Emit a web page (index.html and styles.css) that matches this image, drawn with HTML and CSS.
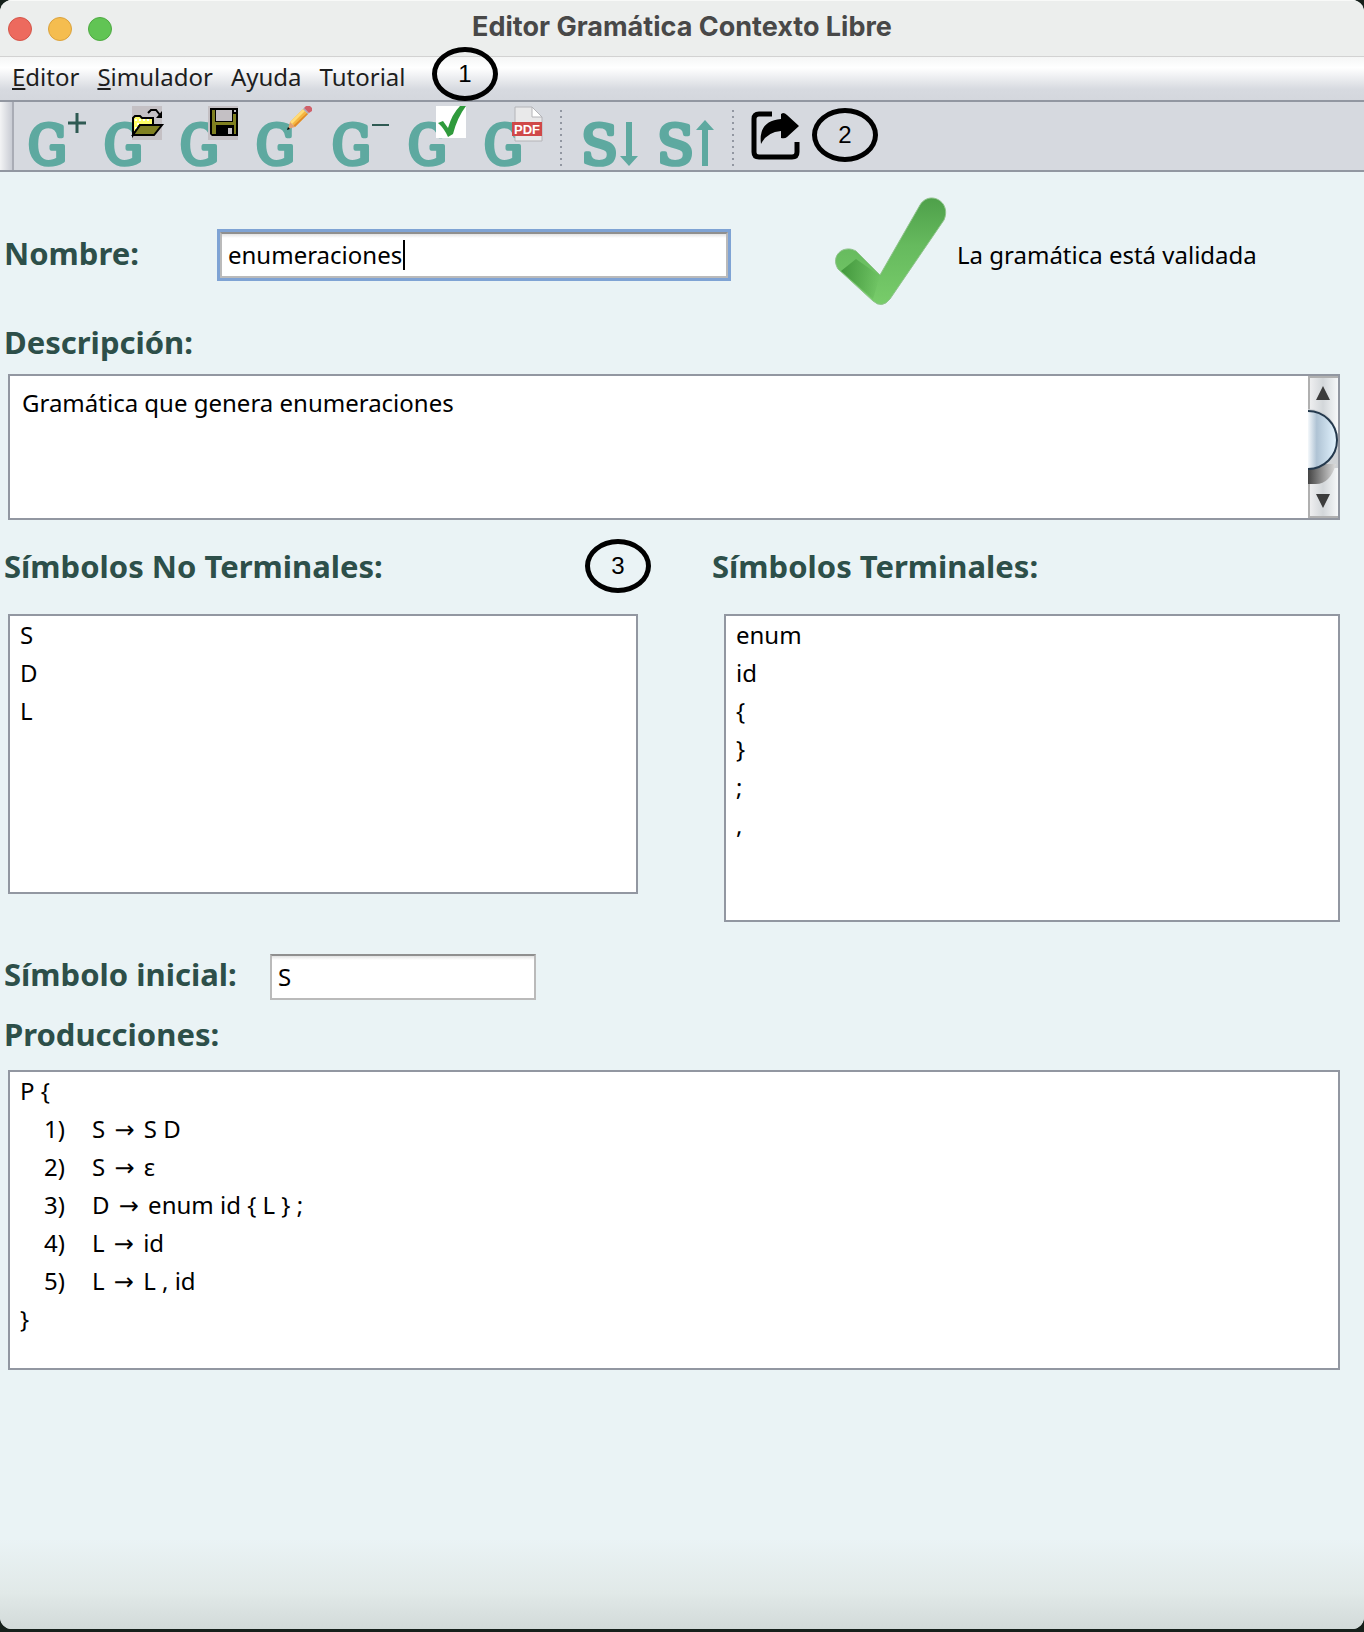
FILE: index.html
```html
<!DOCTYPE html>
<html lang="es">
<head>
<meta charset="utf-8">
<title>Editor Gramática Contexto Libre</title>
<link rel="stylesheet" href="styles.css">
</head>
<body>
<div class="window">
  <header class="titlebar">
    <div class="lights">
      <button class="light light-close" aria-label="Cerrar"></button>
      <button class="light light-min" aria-label="Minimizar"></button>
      <button class="light light-max" aria-label="Ampliar"></button>
    </div>
    <h1 class="title">Editor Gramática Contexto Libre</h1>
  </header>

  <nav class="menubar">
    <button class="menu"><u>E</u>ditor</button>
    <button class="menu"><u>S</u>imulador</button>
    <button class="menu">Ayuda</button>
    <button class="menu">Tutorial</button>
    <span class="mark mark-menu">1</span>
  </nav>

  <div class="toolbar">
    <span class="grip"></span>
    <button class="tool" aria-label="Nueva gramática">
      <svg class="icon" viewBox="0 0 60 62"><text class="glyph" x="0" y="58">G</text>
        <path d="M40 17H58M49 7V27" stroke="#2f5a53" stroke-width="3"/></svg>
    </button>
    <button class="tool" aria-label="Abrir gramática">
      <svg class="icon" viewBox="0 0 60 62"><text class="glyph" x="0" y="58">G</text>
        <path fill="#c4c0c4" d="M28 0h30v34H28z"/>
        <path fill="#ffff66" stroke="#000" stroke-width="2" d="M29 29V12l2-2h5l2 2h11v7H36z"/>
        <path stroke="#fff" stroke-width="2" stroke-dasharray="2 2" d="M31 14h16M33 18h3M31 22h3"/>
        <path fill="#808020" stroke="#000" stroke-width="2" d="M36 19h22l-8 10H29z"/>
        <path fill="none" stroke="#000" stroke-width="2" d="M44 7l3-3h5l4 5"/>
        <path d="M58 5v7h-6z"/></svg>
    </button>
    <button class="tool" aria-label="Guardar gramática">
      <svg class="icon" viewBox="0 0 60 62"><text class="glyph" x="0" y="58">G</text>
        <path fill="#c4c0c4" d="M28 0h30v34H28z"/>
        <path d="M30 2h28v28H32l-2-2z"/>
        <path fill="#808020" d="M32 4h3v12h18V8h3v20h-2v-9H36v9h-4z"/>
        <path fill="#c4c0c4" d="M36 4h16v11H36zM54 4h2v2h-2zM48 22h4v6h-4z"/></svg>
    </button>
    <button class="tool" aria-label="Modificar gramática">
      <svg class="icon" viewBox="0 0 60 62"><text class="glyph" x="0" y="58">G</text>
        <path fill="#f5b640" d="M34 16L47 3l5 5-13 13z"/>
        <path fill="#ffdc78" d="M34 16L47 3l2 2-13 13z"/>
        <path fill="#e08a28" d="M37 20L51 7l1 1-13 13z"/>
        <path fill="#e2a070" d="M34 16l5 5-7 2z"/><path d="M32 21l2 2-3 1z"/>
        <path fill="#aab" d="M47 3l1-1 5 5-1 1z"/>
        <path fill="#d0606a" d="M48 2l2-2h4l2 2v3l-3 2z"/></svg>
    </button>
    <button class="tool" aria-label="Eliminar gramática">
      <svg class="icon" viewBox="0 0 60 62"><text class="glyph" x="0" y="58">G</text>
        <path d="M40 19H57" stroke="#2f5a53" stroke-width="2"/></svg>
    </button>
    <button class="tool" aria-label="Validar gramática">
      <svg class="icon" viewBox="0 0 60 62"><text class="glyph" x="0" y="58">G</text>
        <path fill="#fff" d="M28 0h30v32H28z"/>
        <path fill="#2f9a3c" d="M30 17l5-2 5 7q4-14 12-22h6q-9 12-13 28l-5 3q-4-9-10-14z"/></svg>
    </button>
    <button class="tool" aria-label="Exportar a PDF">
      <svg class="icon" viewBox="0 0 60 62"><text class="glyph" x="0" y="58">G</text>
        <path fill="#e9e9ea" stroke="#b4b4b8" d="M31 1h17l10 10v24H31z"/>
        <path fill="#fff" stroke="#b4b4b8" d="M48 1v10h10z"/>
        <path fill="#d04848" d="M28 16h30v14H28z"/>
        <text class="pdf" x="43" y="28">PDF</text></svg>
    </button>
    <span class="divider"></span>
    <button class="tool" aria-label="Simulador descendente">
      <svg class="icon" viewBox="0 0 60 62"><text class="glyph glyph-wide" x="1" y="58">S</text>
        <path fill="#5ea9a0" d="M46 16h6v34h6L49 60l-9-10h6z"/></svg>
    </button>
    <button class="tool" aria-label="Simulador ascendente">
      <svg class="icon" viewBox="0 0 60 62"><text class="glyph glyph-wide" x="1" y="58">S</text>
        <path fill="#5ea9a0" d="M46 60h6V24h6l-9-10-9 10h6z"/></svg>
    </button>
    <span class="divider"></span>
    <button class="tool" aria-label="Salir">
      <svg class="icon" viewBox="0 0 60 62">
        <path fill="none" stroke="#000" stroke-width="5" d="M20 8H7q-5 0-5 5v33q0 5 5 5h33q5 0 5-5V36"/>
        <path d="M31 7q2 0 4 2l12 11-12 11q-2 2-6 1v-7q-14 1-20 13-3-23 20-25V8z"/></svg>
    </button>
    <span class="mark">2</span>
  </div>

  <main class="content">
    <div class="name-row">
      <label class="heading name-label" for="nombre">Nombre:</label>
      <div class="name-box"><input id="nombre" class="field" value="enumeraciones" size="13"><span class="caret"></span></div>
      <div class="status">
        <svg class="tick" viewBox="0 0 114 116">
          <defs><linearGradient id="leaf" x1="0" y1="0" x2="0" y2="1">
            <stop offset="0" stop-color="#4ea04a"/><stop offset=".45" stop-color="#66ba5e"/><stop offset="1" stop-color="#78cc6a"/></linearGradient>
          <linearGradient id="stem" x1="0" y1="0" x2="1" y2="0">
            <stop offset="0" stop-color="#43983d"/><stop offset="1" stop-color="#43983d" stop-opacity="0"/></linearGradient></defs>
          <path fill="url(#leaf)" stroke="#8fc38b" d="M5 72C-3 59 10 47 23 54L47 78 87 8C96-7 119 4 111 23L57 102Q49 112 40 104Z"/>
          <path fill="url(#stem)" d="M8 74L23 62 47 79 40 102Z"/>
        </svg>
        <span>La gramática está validada</span>
      </div>
    </div>

    <section class="description">
      <label class="heading" for="descripcion">Descripción:</label>
      <div class="panel description-panel">
        <textarea id="descripcion" class="area">Gramática que genera enumeraciones</textarea>
        <div class="scroll">
          <svg class="scroll-art" viewBox="0 0 30 142">
            <defs><linearGradient id="rail"><stop offset="0" stop-color="#f2f2f3"/><stop offset=".5" stop-color="#d3d7da"/><stop offset="1" stop-color="#f6f8f9"/></linearGradient>
            <linearGradient id="knob"><stop offset="0" stop-color="#f4f8fb"/><stop offset=".3" stop-color="#afc3d4"/><stop offset="1" stop-color="#e3f4ff"/></linearGradient>
            <linearGradient id="shade"><stop offset="0" stop-color="#444"/><stop offset="1" stop-color="#ddd"/></linearGradient></defs>
            <path fill="url(#rail)" d="M0 0h30v142H0z"/>
            <path fill="none" stroke="#b0b0b0" stroke-width="2" d="M0 1h30M1 0v142M0 141h30"/>
            <path fill="#d0d3d6" d="M0 33Q24 33 30 60V92H0z"/>
            <path fill="url(#shade)" d="M0 88H28Q22 108 8 108H0z"/>
            <path fill="url(#knob)" stroke="#24394d" stroke-width="2" d="M0 35A29 29 0 0 1 0 93"/>
            <path fill="#3c3c3c" d="M15 10l7 14H8zM15 132l7-14H8z"/>
          </svg>
        </div>
      </div>
    </section>

    <section class="symbols">
      <div>
        <h2 class="heading">Símbolos No Terminales:</h2>
        <ul class="panel list list-left"><li>S</li><li>D</li><li>L</li></ul>
        <span class="mark mark-symbols">3</span>
      </div>
      <div>
        <h2 class="heading">Símbolos Terminales:</h2>
        <ul class="panel list list-right"><li>enum</li><li>id</li><li>{</li><li>}</li><li>;</li><li>,</li></ul>
      </div>
    </section>

    <div class="start-row">
      <label class="heading start-label" for="inicial">Símbolo inicial:</label>
      <input id="inicial" class="field start-field" value="S">
    </div>

    <section>
      <h2 class="heading">Producciones:</h2>
      <div class="panel productions">
        <div>P {</div>
        <ol class="rules">
          <li><span class="num">1)</span>S <span class="arrow">→</span> S D</li>
          <li><span class="num">2)</span>S <span class="arrow">→</span> ε</li>
          <li><span class="num">3)</span>D <span class="arrow">→</span> enum id { L } ;</li>
          <li><span class="num">4)</span>L <span class="arrow">→</span> id</li>
          <li><span class="num">5)</span>L <span class="arrow">→</span> L , id</li>
        </ol>
        <div>}</div>
      </div>
    </section>
  </main>
</div>
</body>
</html>
```
FILE: styles.css
```css
* { box-sizing: border-box; }

body {
  margin: 0;
  background: #16201b;
  color: #000;
  font: 24px/38px "Noto Sans", "Open Sans", sans-serif;
}

button {
  margin: 0;
  padding: 0;
  border: 0;
  background: none;
  color: inherit;
  font: inherit;
}

ul, ol { margin: 0; padding: 0; list-style: none; }

.window {
  display: flex;
  flex-direction: column;
  min-height: calc(100vh - 3px);
  overflow: hidden;
  border-radius: 12px;
  background: #eaf3f5;
}

.titlebar {
  display: grid;
  grid-template-columns: 1fr auto 1fr;
  align-items: center;
  height: 57px;
  border-top: 1px solid #f8f9f8;
  border-bottom: 1px solid #d2d2d2;
  background: #eceeed;
}

.lights { display: flex; gap: 16px; padding-left: 8px; }

.light {
  width: 24px;
  height: 24px;
  border: 1px solid;
  border-radius: 50%;
}

.light-close { background: #ed6a5e; border-color: #d45549; }
.light-min { background: #f5bd4f; border-color: #dba23c; }
.light-max { background: #61c454; border-color: #4eaa42; }

.title {
  margin: 0;
  padding-bottom: 4px;
  color: #484848;
  font: 700 27px/32px Inter, sans-serif;
}

.menubar {
  position: relative;
  display: flex;
  gap: 18px;
  height: 45px;
  padding: 0 0 4px 12px;
  border-bottom: 2px solid #9297a1;
  background: linear-gradient(#f5f6f6, #fff 25%, #d7dae0 75%, #d4d7dd);
}

.menu { color: #1e1e1e; }
.menu u { text-decoration-thickness: 2px; text-underline-offset: 2px; }

.mark {
  display: flex;
  align-items: center;
  justify-content: center;
  width: 66px;
  height: 54px;
  border: 5px solid #000;
  border-radius: 50%;
  color: #000;
  font: 24px/28px "Liberation Sans", sans-serif;
}

.mark-menu { position: absolute; left: 432px; top: -10px; z-index: 1; }
.mark-symbols { position: absolute; right: -13px; top: -7px; }

.toolbar {
  display: flex;
  gap: 16px;
  height: 70px;
  border-bottom: 2px solid #9297a1;
  background: #d6d9df;
}

.toolbar .mark { margin: 6px 0 0 -16px; }

.grip {
  width: 14px;
  margin-right: -2px;
  border-right: 2px solid #a9acb5;
  background: linear-gradient(90deg, #f3f4f5, #c9ccd4);
}

.tool { width: 60px; height: 62px; margin-top: 4px; }
.icon { display: block; width: 60px; height: 62px; overflow: visible; }

.glyph {
  fill: #5ea9a0;
  stroke: #5ea9a0;
  stroke-width: 4px;
  stroke-linejoin: round;
  font: 54px "DejaVu Serif Condensed", "DejaVu Serif", serif;
}

.glyph-wide { font-family: "DejaVu Serif", serif; }

.pdf {
  fill: #fff;
  font: 700 13px "Liberation Sans", sans-serif;
  text-anchor: middle;
}

.divider {
  width: 2px;
  height: 58px;
  margin: 8px 2px 0 0;
  background: repeating-linear-gradient(#9297a1 0 2px, transparent 2px 6px);
}

.content {
  flex: 1;
  padding: 25px 24px 40px 4px;
  background: linear-gradient(to top, #d2dad9, #e1e9e8 36px, #eaf3f5 90px);
}

.heading {
  display: block;
  margin: 0;
  color: #2d4f49;
  font-size: 31px;
  line-height: 40px;
  font-weight: 700;
}

.name-row { display: flex; align-items: center; height: 116px; }
.name-label { width: 213px; padding-bottom: 4px; }

.name-box {
  position: relative;
  flex: 1;
  border: 3px solid #7fa3d4;
}

.field {
  display: block;
  width: 100%;
  height: 46px;
  padding: 0 6px 2px;
  border: 2px solid #bababa;
  border-top-color: #8f8f8f;
  border-radius: 0;
  outline: 0;
  background: linear-gradient(#e2e2e2, #fff 4px);
  color: #000;
  font: inherit;
}

.caret {
  position: absolute;
  left: 183px;
  top: 8px;
  width: 2px;
  height: 30px;
  background: #000;
}

.status { display: flex; align-items: center; gap: 10px; width: 609px; padding-left: 102px; }
.tick { width: 114px; height: 116px; }

.description { margin-top: 9px; }

.panel {
  margin-left: 4px;
  border: 2px solid #9297a1;
  background: #fff;
}

.description-panel { display: flex; height: 146px; margin-top: 12px; }

.area {
  flex: 1;
  padding: 8px 12px;
  border: 0;
  outline: 0;
  resize: none;
  background: none;
  color: #000;
  font: inherit;
}

.scroll, .scroll-art { display: block; width: 30px; height: 142px; }

.symbols {
  display: grid;
  grid-template-columns: 634fr 628fr;
  gap: 74px;
  margin-top: 26px;
}

.symbols > div { position: relative; }
.list { margin-top: 28px; padding: 0 10px; }
.list-left { height: 280px; }
.list-right { height: 308px; margin-left: 12px; }

.start-row { display: flex; margin: 32px 0 14px; }
.start-label { width: 266px; }
.start-field { width: 266px; }

.productions { min-height: 300px; margin-top: 16px; padding: 0 10px; }
.rules { padding-left: 24px; }
.rules li { height: 38px; }
.num { display: inline-block; width: 48px; }
.arrow { margin: 0 3px; font-family: "DejaVu Sans", sans-serif; }
```
